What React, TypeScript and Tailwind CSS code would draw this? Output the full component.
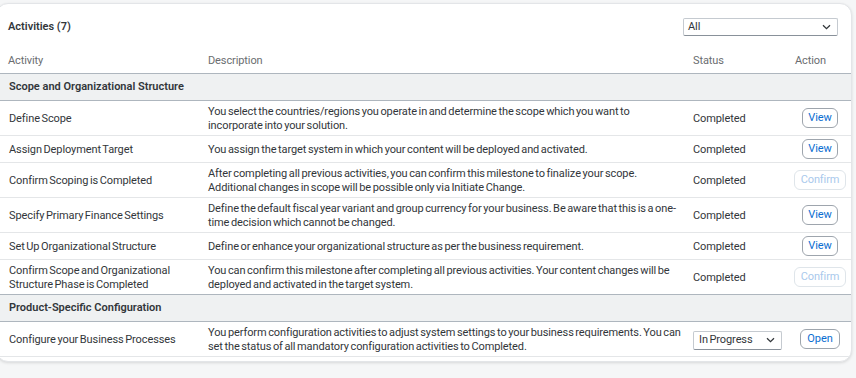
import React from "react";

type Row = {
  name: string[];
  desc: string[];
  status: string;
  action: "View" | "Confirm" | "Open";
  select?: boolean;
};

const group1: Row[] = [
  {
    name: ["Define Scope"],
    desc: [
      "You select the countries/regions you operate in and determine the scope which you want to",
      "incorporate into your solution.",
    ],
    status: "Completed",
    action: "View",
  },
  {
    name: ["Assign Deployment Target"],
    desc: ["You assign the target system in which your content will be deployed and activated."],
    status: "Completed",
    action: "View",
  },
  {
    name: ["Confirm Scoping is Completed"],
    desc: [
      "After completing all previous activities, you can confirm this milestone to finalize your scope.",
      "Additional changes in scope will be possible only via Initiate Change.",
    ],
    status: "Completed",
    action: "Confirm",
  },
  {
    name: ["Specify Primary Finance Settings"],
    desc: [
      "Define the default fiscal year variant and group currency for your business. Be aware that this is a one-",
      "time decision which cannot be changed.",
    ],
    status: "Completed",
    action: "View",
  },
  {
    name: ["Set Up Organizational Structure"],
    desc: ["Define or enhance your organizational structure as per the business requirement."],
    status: "Completed",
    action: "View",
  },
  {
    name: ["Confirm Scope and Organizational", "Structure Phase is Completed"],
    desc: [
      "You can confirm this milestone after completing all previous activities. Your content changes will be",
      "deployed and activated in the target system.",
    ],
    status: "Completed",
    action: "Confirm",
  },
];

const group2: Row[] = [
  {
    name: ["Configure your Business Processes"],
    desc: [
      "You perform configuration activities to adjust system settings to your business requirements. You can",
      "set the status of all mandatory configuration activities to Completed.",
    ],
    status: "In Progress",
    action: "Open",
    select: true,
  },
];

const cols = "grid grid-cols-[203px_485px_102px_66px]";

function Chevron() {
  return (
    <svg width="9" height="6" viewBox="0 0 9 6" fill="none">
      <path d="M1 1.2 L4.5 4.6 L8 1.2" stroke="#32363a" strokeWidth="1.3" />
    </svg>
  );
}

function Lines({ lines }: { lines: string[] }) {
  return (
    <div>
      {lines.map((l, i) => (
        <div key={i} className="whitespace-nowrap">
          {l}
        </div>
      ))}
    </div>
  );
}

function ActionBtn({ kind }: { kind: Row["action"] }) {
  if (kind === "Confirm") {
    return (
      <div className="h-[20px] px-[6px] flex items-center rounded-[6px] border border-[#dfe5ea] text-[#a9c9ec]">
        Confirm
      </div>
    );
  }
  if (kind === "View") {
    return (
      <div className="h-[20px] px-[5px] flex items-center rounded-[6px] border border-[#9ea5ad] text-[#0a6ed1]">
        View
      </div>
    );
  }
  return (
    <div className="h-[20px] px-[6px] flex items-center rounded-[6px] border border-[#9ea5ad] text-[#0a6ed1]">
      {kind}
    </div>
  );
}

function DataRow({ r, last }: { r: Row; last?: boolean }) {
  return (
    <div className={`${cols} ${last ? "" : "border-b border-[#e4e6e8]"} text-[#32363a]`}>
      <div className="pl-[12px] pt-[4px] pb-[2px] flex items-center">
        <Lines lines={r.name} />
      </div>
      <div className="pl-2 pt-[4px] pb-[2px] flex items-center">
        <Lines lines={r.desc} />
      </div>
      <div className="pl-2 pt-[4px] pb-[2px] flex items-center">
        {r.select ? (
          <div className="w-[89px] h-[19px] pl-[5px] pr-[6px] flex items-center justify-between bg-white border border-[#c5cad0] border-b-[#89919a] rounded-[2px]">
            <span>{r.status}</span>
            <Chevron />
          </div>
        ) : (
          <span>{r.status}</span>
        )}
      </div>
      <div className="py-[3px] flex items-center justify-center min-h-[26px]">
        <ActionBtn kind={r.action} />
      </div>
    </div>
  );
}

function GroupRow({ title }: { title: string }) {
  return (
    <div className="h-[27px] pl-[12px] flex items-center bg-[#eff1f2] border-b border-[#aeb6be] font-semibold text-[#32363a] tracking-normal [word-spacing:0px]">
      {title}
    </div>
  );
}

export default function App() {
  return (
    <div
      className="w-[856px] h-[378px] bg-[#f5f6f7] overflow-hidden pt-[3px] text-[11px] leading-[14px] tracking-[-0.1px] [word-spacing:-1px]"
      style={{ fontFamily: 'Roboto, "Liberation Sans", Arial, sans-serif' }}
    >
      <div className="-ml-[4px] w-[856px] bg-white rounded-[12px] border border-[#e3e5e8] shadow-[0_1px_3px_rgba(0,0,0,0.12)] overflow-hidden">
        <div className="h-[32px] pl-[11px] pr-[13px] pt-[14px] flex items-start justify-between">
          <div className="font-semibold text-[#32363a] mt-[2px] tracking-normal [word-spacing:0px]">Activities (7)</div>
          <div className="w-[155px] h-[18px] pl-[4px] pr-[6px] flex items-center justify-between border border-[#c5cad0] border-b-[#89919a] rounded-[2px] text-[#32363a]">
            <span>All</span>
            <Chevron />
          </div>
        </div>
        <div className={`${cols} h-[38px] items-end pb-[5px] border-b border-[#aeb6be] text-[#6a6d70]`}>
          <div className="pl-[11px]">Activity</div>
          <div className="pl-2">Description</div>
          <div className="pl-2">Status</div>
          <div className="pl-2">Action</div>
        </div>
        <GroupRow title="Scope and Organizational Structure" />
        {group1.map((r, i) => (
          <DataRow key={i} r={r} last={i === group1.length - 1} />
        ))}
        <div className="border-t border-[#aeb6be]">
          <GroupRow title="Product-Specific Configuration" />
        </div>
        {group2.map((r, i) => (
          <DataRow key={i} r={r} />
        ))}
        <div className="h-[4px]" />
      </div>
    </div>
  );
}
